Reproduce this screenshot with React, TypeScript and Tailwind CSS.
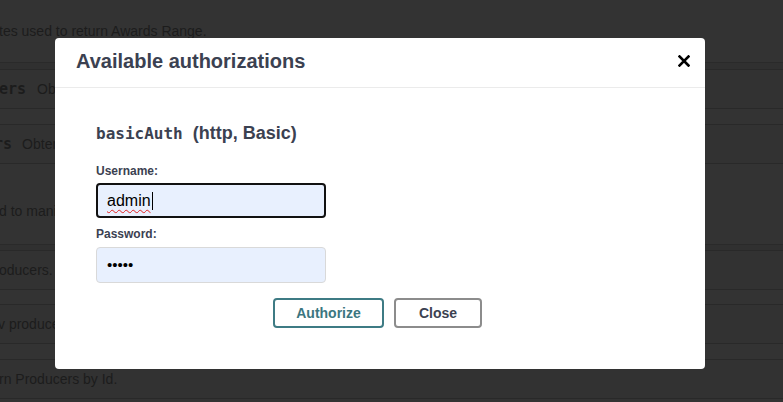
const sans = "font-['Liberation_Sans',Arial,sans-serif]";
const mono = "font-['DejaVu_Sans_Mono','Liberation_Mono',monospace]";

function OpRow({ children, gapTop = 0 }: { children: React.ReactNode; gapTop?: number }) {
  return (
    <div style={{ marginTop: gapTop }} className="h-[40px] border-y border-[#292929] bg-[#323232] flex items-center text-[14px] text-[#1c1c1c]">
      {children}
    </div>
  );
}

function CloseIcon() {
  return (
    <svg width="12" height="12" viewBox="0 0 12 12" className="block">
      <path d="M1.5 1.5 L10.5 10.5 M10.5 1.5 L1.5 10.5" stroke="#000" strokeWidth="2.6" strokeLinecap="square" />
    </svg>
  );
}

export default function App() {
  return (
    <div className={`relative w-[783px] h-[402px] overflow-hidden bg-[#333333] ${sans}`}>
      {/* page behind the overlay */}
      <div className="flex flex-col">
        <div className="h-[62px] flex items-center text-[14px] text-[#1c1c1c] -ml-[1px]">tes used to return Awards Range.</div>
        <div className="h-[7px] border-t border-[#2a2a2a] bg-[#303030]" />
        <OpRow>
          <span className={`${mono} font-bold text-[15px] -ml-[1px]`}>ers</span>
          <span className="ml-[11px]">Obter</span>
        </OpRow>
        <OpRow gapTop={15}>
          <span className={`${mono} font-bold text-[15px] -ml-[6px]`}>rs</span>
          <span className="ml-[10px]">Obter</span>
        </OpRow>
        <div className="h-[80px] flex items-end pb-[22px] text-[14px] text-[#1c1c1c]">
          <span className="-ml-[1px]">d to manip</span>
        </div>
        <div className="h-[6px] border-t border-[#2a2a2a] bg-[#303030]" />
        <OpRow>
          <span className="-ml-[1px]">oducers.</span>
        </OpRow>
        <OpRow gapTop={14}>
          <span className="-ml-[2px]">v producer</span>
        </OpRow>
        <OpRow gapTop={15}>
          <span className="-ml-[1px]">rn Producers by Id.</span>
        </OpRow>
      </div>

      {/* modal */}
      <div className="absolute left-[55px] top-[38px] w-[650px] rounded-[4px] bg-white">
        <div className="h-[50px] border-b border-[#ebebeb] flex items-center justify-between pl-[21px] pr-[15px] pb-[3px]">
          <h3 className="text-[20px] font-bold text-[#3b4151] leading-none">Available authorizations</h3>
          <CloseIcon />
        </div>
        <div className="pt-[35px] pb-[41px] pl-[41px]">
          <h4 className="h-[20px] leading-[20px] text-[18px] font-bold text-[#3b4151]">
            <span className={`${mono} text-[16px]`}>basicAuth</span>
            <span className="ml-[10px]">(http, Basic)</span>
          </h4>
          <label className="block mt-[21px] h-[15px] leading-[15px] text-[12px] font-bold text-[#3b4151]">Username:</label>
          <div className="mt-[4px] w-[230px] h-[35px] rounded-[4px] border-2 border-[#111] bg-[#e8f0fe] flex items-center pl-[9px] text-[16px] text-black">
            <span className="underline decoration-wavy decoration-[#e02020] decoration-1 underline-offset-[3px]">admin</span>
            <span className="ml-[1px] w-[1px] h-[18px] bg-black" />
          </div>
          <label className="block mt-[9px] h-[15px] leading-[15px] text-[12px] font-bold text-[#3b4151]">Password:</label>
          <div className="mt-[5px] w-[230px] h-[36px] rounded-[4px] border border-[#d9d9d9] bg-[#e8f0fe] flex items-center pl-[10px] text-[15px] text-black">
            •••••
          </div>
          <div className="mt-[15px] flex justify-center gap-[10px] pr-[46px]">
            <button className="w-[111px] h-[30px] rounded-[4px] border-2 border-[#3e7b84] text-[14px] font-bold text-[#3b7680]">Authorize</button>
            <button className="w-[88px] h-[30px] rounded-[4px] border-2 border-[#8c8c8c] text-[14px] font-bold text-[#3b4151]">Close</button>
          </div>
        </div>
      </div>
    </div>
  );
}
